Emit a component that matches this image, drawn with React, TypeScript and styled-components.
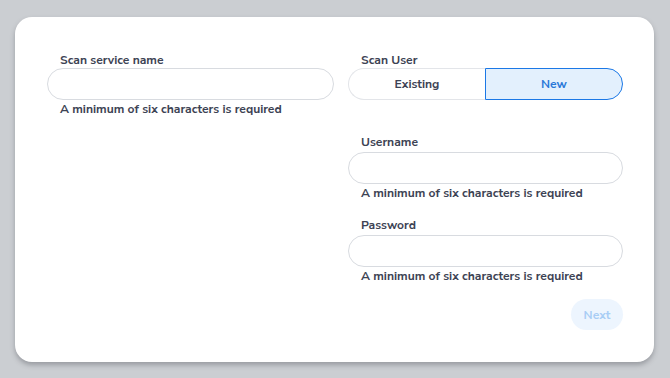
import styled, { createGlobalStyle } from "styled-components";

const GlobalStyle = createGlobalStyle`
  html, body {
    margin: 0;
    padding: 0;
    background: #cbced2;
    font-family: "Nunito Sans", Lato, "Open Sans", sans-serif;
  }
  * {
    box-sizing: border-box;
  }
`;

const Page = styled.div`
  padding: 17px 16px 16px 15px;
`;

const Card = styled.div`
  background: #ffffff;
  border-radius: 17px;
  box-shadow: 0 3px 5px rgba(60, 64, 72, 0.35);
  padding: 35px 31px 32px 32px;
  display: grid;
  grid-template-columns: 287px 1fr;
  column-gap: 14px;
  align-items: start;
`;

const Column = styled.div`
  display: flex;
  flex-direction: column;
`;

const Field = styled.div<{ $spaced?: boolean }>`
  display: flex;
  flex-direction: column;
  margin-top: ${(p) => (p.$spaced ? "16px" : "0")};
`;

const Label = styled.div<{ $tight?: boolean }>`
  font-size: 12.1px;
  font-weight: 700;
  line-height: 16px;
  color: #3d4354;
  padding-left: 13px;
  margin-bottom: ${(p) => (p.$tight ? "0" : "2px")};
`;

const Input = styled.input`
  height: 32px;
  width: 100%;
  border: 1px solid #d8dbe0;
  border-radius: 16px;
  background: #ffffff;
  padding: 0 13px;
  font: inherit;
  font-size: 12px;
  outline: none;
`;

const Helper = styled.div`
  font-size: 12.1px;
  font-weight: 700;
  line-height: 16px;
  color: #3d4354;
  padding-left: 13px;
  margin-top: 1px;
`;

const Segmented = styled.div`
  display: grid;
  grid-template-columns: 137px 1fr;
  height: 32px;
  margin-bottom: 34px;
`;

const Segment = styled.button<{ $active?: boolean }>`
  font: inherit;
  font-size: 12.1px;
  font-weight: 700;
  cursor: pointer;
  border: 1px solid ${(p) => (p.$active ? "#1b78e6" : "#e3e5e9")};
  background: ${(p) => (p.$active ? "#e3f0fd" : "#ffffff")};
  color: ${(p) => (p.$active ? "#2a78d8" : "#3d4354")};
  border-radius: ${(p) => (p.$active ? "0 16px 16px 0" : "16px 0 0 16px")};
  border-right-width: ${(p) => (p.$active ? "1px" : "0")};
`;

const Actions = styled.div`
  display: flex;
  justify-content: flex-end;
  margin-top: 15px;
`;

const NextButton = styled.button`
  font: inherit;
  font-size: 12.1px;
  font-weight: 700;
  height: 31px;
  width: 52px;
  border: none;
  border-radius: 16px;
  background: #edf5fe;
  color: #a8cdf5;
  cursor: default;
`;

const HELP = "A minimum of six characters is required";

export default function App() {
  return (
    <>
      <GlobalStyle />
      <Page>
        <Card>
          <Column>
            <Field>
              <Label $tight>Scan service name</Label>
              <Input />
              <Helper>{HELP}</Helper>
            </Field>
          </Column>
          <Column>
            <Label $tight>Scan User</Label>
            <Segmented>
              <Segment>Existing</Segment>
              <Segment $active>New</Segment>
            </Segmented>
            <Field>
              <Label>Username</Label>
              <Input />
              <Helper>{HELP}</Helper>
            </Field>
            <Field $spaced>
              <Label>Password</Label>
              <Input type="password" />
              <Helper>{HELP}</Helper>
            </Field>
            <Actions>
              <NextButton disabled>Next</NextButton>
            </Actions>
          </Column>
        </Card>
      </Page>
    </>
  );
}
